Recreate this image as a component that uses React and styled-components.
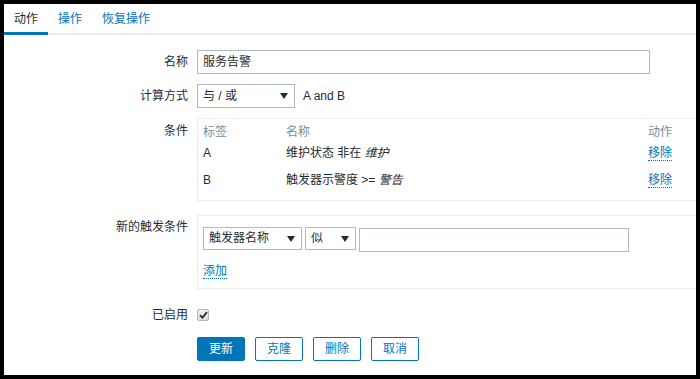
import React from "react";
import styled, { createGlobalStyle } from "styled-components";

const GlobalStyle = createGlobalStyle`
  html, body {
    margin: 0;
    padding: 0;
    background: #000;
  }
  body {
    font-family: "Liberation Sans", Arial, "Noto Sans CJK SC", sans-serif;
    font-size: 12px;
    color: #1f2c33;
  }
`;

const Frame = styled.div`
  box-sizing: border-box;
  width: 700px;
  height: 379px;
  border: 4px solid #000;
  background: #fff;
  overflow: hidden;
`;

const TabBar = styled.div`
  display: flex;
  height: 31px;
  box-sizing: border-box;
  border-bottom: 2px solid #ebeef0;
`;

const Tab = styled.div`
  padding: 8px 10px 0;
  line-height: 14px;
  color: ${(p) => (p.$active ? "#1f2c33" : "#0275b8")};
  border-bottom: 3px solid ${(p) => (p.$active ? "#0275b8" : "transparent")};
  margin-bottom: -2px;
`;

const Form = styled.div`
  padding-top: 15px;
`;

const Row = styled.div`
  display: flex;
  align-items: flex-start;
  margin-top: ${(p) => p.$mt || 0}px;
`;

const Label = styled.div`
  width: 184px;
  flex-shrink: 0;
  padding-right: 9px;
  text-align: right;
  line-height: 24px;
  margin-top: ${(p) => p.$mt || 0}px;
`;

const Control = styled.div`
  flex: 1;
  display: flex;
  align-items: center;
  gap: 8px;
  min-width: 0;
`;

const TextInput = styled.div`
  box-sizing: border-box;
  width: ${(p) => p.$w}px;
  height: 24px;
  border: 1px solid #acbbc2;
  padding: 0 5px;
  line-height: 22px;
  background: #fff;
  margin-top: ${(p) => p.$mt || 0}px;
`;

const Select = styled.div`
  box-sizing: border-box;
  position: relative;
  width: ${(p) => p.$w}px;
  height: ${(p) => p.$h || 24}px;
  border: 1px solid #acbbc2;
  padding: 0 5px;
  line-height: ${(p) => (p.$h || 24) - 2}px;
  background: #fff;
  &::after {
    content: "";
    position: absolute;
    right: 6px;
    top: 50%;
    margin-top: -3px;
    border-left: 4px solid transparent;
    border-right: 4px solid transparent;
    border-top: 6px solid #1f2c33;
  }
`;

const Box = styled.div`
  flex: 1;
  box-sizing: border-box;
  border: 1px solid #ebeef0;
  border-right: none;
  padding: ${(p) => p.$pad};
`;

const Table = styled.div`
  display: grid;
  grid-template-columns: 83px 1fr 48px;
`;

const HeadCell = styled.div`
  color: #768d99;
  height: 16px;
  line-height: 16px;
`;

const Cell = styled.div`
  height: 27px;
  line-height: 27px;
`;

const Em = styled.i`
  font-style: italic;
`;

const Link = styled.span`
  color: #0275b8;
  border-bottom: 1px dotted #0275b8;
  line-height: 14px;
  display: inline-block;
`;

const InlineFields = styled.div`
  display: flex;
  align-items: flex-start;
  gap: 3px;
`;

const AddLine = styled.div`
  margin-top: 12px;
`;

const Check = styled.div`
  width: 12px;
  height: 12px;
  box-sizing: border-box;
  margin-top: 6px;
  border: 1px solid #b5b5b5;
  border-radius: 2px;
  background: linear-gradient(#f0f0f0, #dcdcdc);
  display: flex;
  align-items: center;
  justify-content: center;
`;

const Buttons = styled.div`
  display: flex;
  gap: 10px;
`;

const Button = styled.div`
  box-sizing: border-box;
  width: 48px;
  height: 24px;
  border-radius: 2px;
  border: 1px solid #0275b8;
  background: ${(p) => (p.$primary ? "#0275b8" : "#fff")};
  color: ${(p) => (p.$primary ? "#fff" : "#0275b8")};
  text-align: center;
  line-height: 22px;
`;

export default function App() {
  return (
    <>
      <GlobalStyle />
      <Frame>
        <TabBar>
          <Tab $active>动作</Tab>
          <Tab>操作</Tab>
          <Tab>恢复操作</Tab>
        </TabBar>
        <Form>
          <Row>
            <Label>名称</Label>
            <Control>
              <TextInput $w={453}>服务告警</TextInput>
            </Control>
          </Row>
          <Row $mt={10}>
            <Label>计算方式</Label>
            <Control>
              <Select $w={98}>与 / 或</Select>
              <span>A and B</span>
            </Control>
          </Row>
          <Row $mt={10}>
            <Label $mt={1}>条件</Label>
            <Box $pad="5px 0 6px 5px">
              <Table>
                <HeadCell>标签</HeadCell>
                <HeadCell>名称</HeadCell>
                <HeadCell>动作</HeadCell>
                <Cell>A</Cell>
                <Cell>
                  维护状态 非在 <Em>维护</Em>
                </Cell>
                <Cell>
                  <Link>移除</Link>
                </Cell>
                <Cell>B</Cell>
                <Cell>
                  触发器示警度 &gt;= <Em>警告</Em>
                </Cell>
                <Cell>
                  <Link>移除</Link>
                </Cell>
              </Table>
            </Box>
          </Row>
          <Row $mt={14}>
            <Label>新的触发条件</Label>
            <Box $pad="11px 0 9px 5px">
              <InlineFields>
                <Select $w={99} $h={23}>触发器名称</Select>
                <Select $w={51} $h={23}>似</Select>
                <TextInput $w={270} $mt={1} />
              </InlineFields>
              <AddLine>
                <Link>添加</Link>
              </AddLine>
            </Box>
          </Row>
          <Row $mt={14}>
            <Label>已启用</Label>
            <Check>
              <svg width="9" height="8" viewBox="0 0 9 8">
                <path d="M1 4.2 L3.4 6.6 L8 1.2" fill="none" stroke="#2b2b2b" strokeWidth="1.8" />
              </svg>
            </Check>
          </Row>
          <Row $mt={10}>
            <Label />
            <Buttons>
              <Button $primary>更新</Button>
              <Button>克隆</Button>
              <Button>删除</Button>
              <Button>取消</Button>
            </Buttons>
          </Row>
        </Form>
      </Frame>
    </>
  );
}
